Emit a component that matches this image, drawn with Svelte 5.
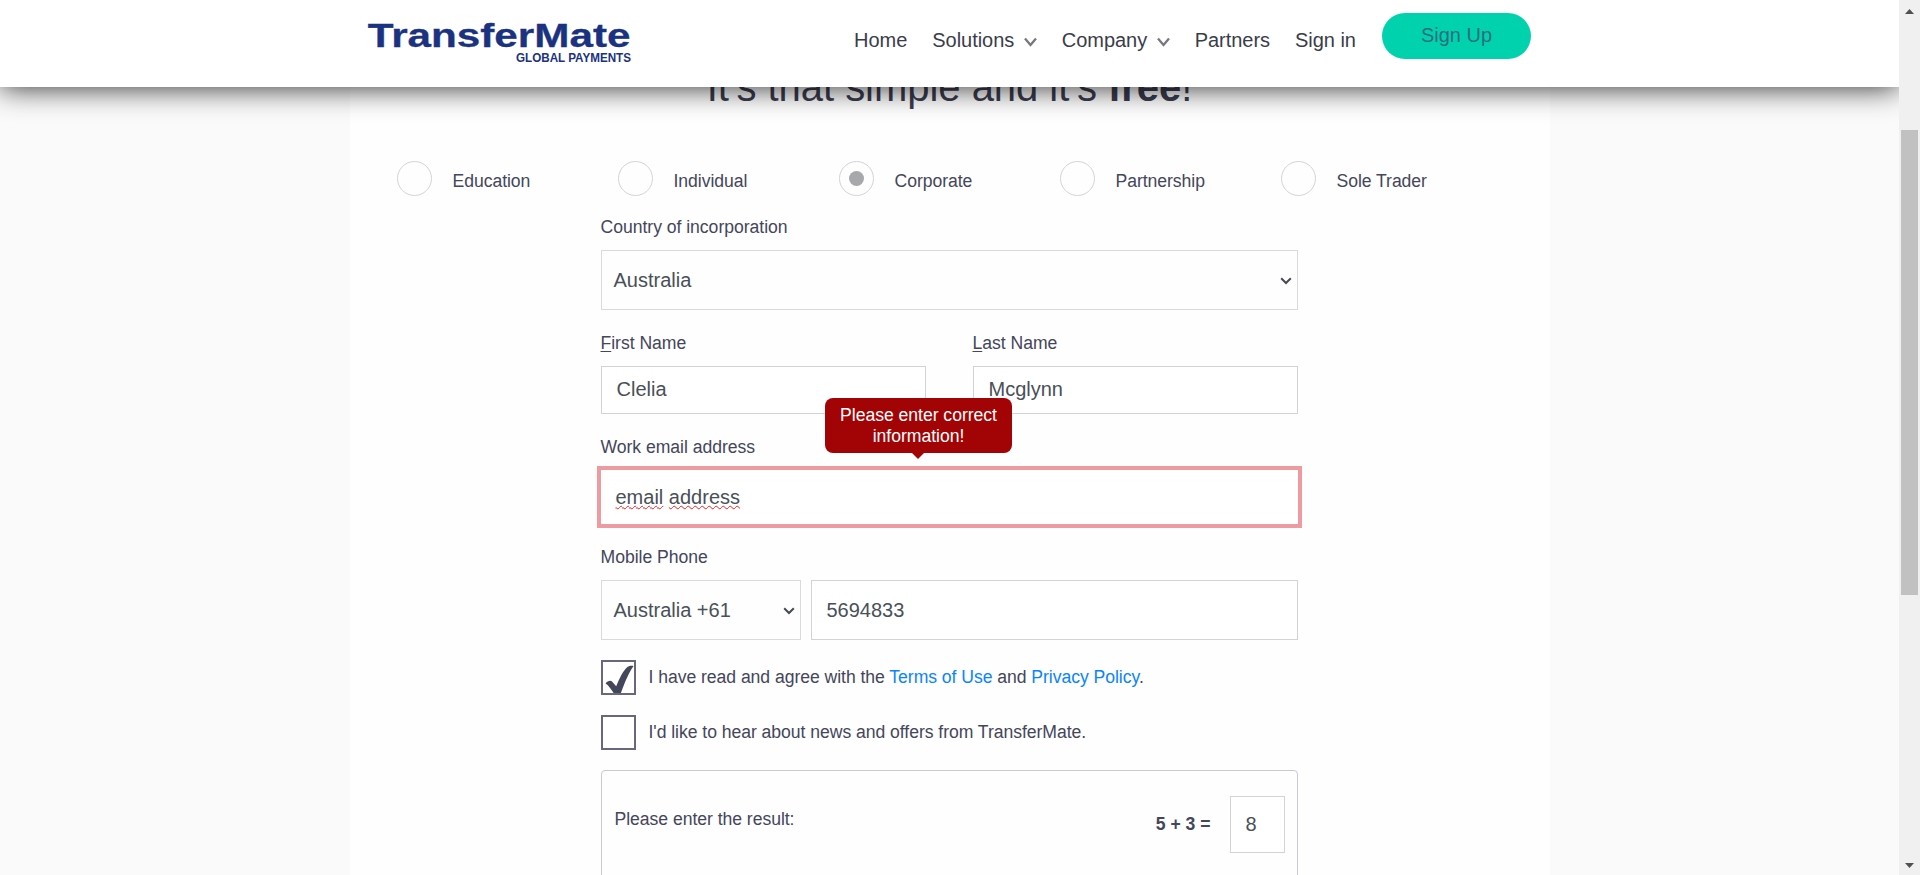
<script>
  const nav = [
    { label: 'Home' },
    { label: 'Solutions', menu: true },
    { label: 'Company', menu: true },
    { label: 'Partners' },
    { label: 'Sign in' }
  ];
  const types = ['Education', 'Individual', 'Corporate', 'Partnership', 'Sole Trader'];
  let selected = $state('Corporate');
  let first = $state('Clelia');
  let last = $state('Mcglynn');
  let phone = $state('5694833');
  let answer = $state('8');
</script>

{#snippet arrow()}
  <svg class="arrow" width="12" height="8" viewBox="0 0 12 8"><path d="M1.2 1.2 6 6 10.8 1.2" /></svg>
{/snippet}

<div class="screen">
  <header>
    <div class="bar">
      <a class="logo" href="#home" aria-label="TransferMate Global Payments">
        <svg width="266" height="44" viewBox="0 0 266 44">
          <text class="brand" transform="translate(-0.3 27) scale(1.288 1)" textLength="204" lengthAdjust="spacingAndGlyphs">TransferMate</text>
          <text class="tag" x="148" y="42" textLength="115" lengthAdjust="spacingAndGlyphs">GLOBAL PAYMENTS</text>
        </svg>
      </a>
      <nav>
        {#each nav as item}
          <a href="#nav">
            {item.label}
            {#if item.menu}
              <svg width="13" height="10" viewBox="0 0 13 10"><path d="M1 1.5 6.5 8 12 1.5" /></svg>
            {/if}
          </a>
        {/each}
      </nav>
      <a class="signup" href="#signup">Sign Up</a>
    </div>
  </header>

  <main>
    <h1>It's that simple and it's <b>free</b>!</h1>
    <div class="types">
      {#each types as t}
        <button class="type" onclick={() => (selected = t)}>
          <span class="radio" class:on={selected === t}></span>
          <span>{t}</span>
        </button>
      {/each}
    </div>

    <form>
      <div class="label">Country of incorporation</div>
      <div class="select">
        <span>Australia</span>
        {@render arrow()}
      </div>

      <div class="names">
        <div>
          <div class="label"><u>F</u>irst Name</div>
          <input bind:value={first} />
        </div>
        <div>
          <div class="label"><u>L</u>ast Name</div>
          <input bind:value={last} />
        </div>
      </div>

      <div class="label email-label">Work email address</div>
      <div class="email">
        <span class="typo">email</span>&nbsp;<span class="typo">address</span>
        <div class="tip">Please enter correct information!</div>
      </div>

      <div class="label phone-label">Mobile Phone</div>
      <div class="phone">
        <div class="select code">
          <span>Australia +61</span>
          {@render arrow()}
        </div>
        <input class="number" bind:value={phone} />
      </div>

      <div class="check">
        <span class="box">
          <svg width="31" height="31" viewBox="0 0 31 31">
            <path d="M2.6 21.4C4 19 7.4 17.9 8.8 19.2L13.2 24.2C16.4 16.4 20.2 8.4 24.4 4.9C26.2 3.6 28.8 3.5 30.6 4C26.4 9.6 21.6 20.4 17.7 31.6C15.8 33.2 12.5 33.2 11.4 32.2C8.6 27.8 6.1 23.8 2.6 21.4Z" />
          </svg>
        </span>
        <span>I have read and agree with the <a href="#terms">Terms of Use</a> and <a href="#privacy">Privacy Policy</a>.</span>
      </div>
      <div class="check">
        <span class="box"></span>
        <span>I'd like to hear about news and offers from TransferMate.</span>
      </div>

      <div class="captcha">
        <span class="ask">Please enter the result:</span>
        <b>5 + 3 =</b>
        <input class="answer" bind:value={answer} />
      </div>
    </form>
  </main>

  <aside class="scroll">
    <svg width="9" height="5" viewBox="0 0 9 5"><path d="M4.5 0 9 5H0Z" /></svg>
    <div class="track"><div class="thumb"></div></div>
    <svg width="9" height="5" viewBox="0 0 9 5"><path d="M0 0H9L4.5 5Z" /></svg>
  </aside>
</div>

<style>
  :global(body) { margin: 0; overflow: hidden; }
  .screen {
    position: relative;
    display: grid;
    grid-template-columns: 1fr 21px;
    height: 875px;
    overflow: hidden;
    background: #fafafa;
    color: #44465b;
    font: 17.6px/24px "Liberation Sans", Arial, sans-serif;
  }
  .screen * { box-sizing: border-box; }
  a { color: #0a84ff; text-decoration: none; }
  header {
    position: absolute;
    top: 0;
    left: 0;
    right: 21px;
    z-index: 3;
    height: 87px;
    background: #fff;
    box-shadow: 0 0 30px rgba(0, 0, 0, 0.86);
  }
  .bar {
    display: flex;
    width: 1163px;
    margin-left: 368px;
    align-items: flex-start;
  }
  .logo { display: block; height: 44px; margin-top: 20px; }
  .logo svg { display: block; overflow: visible; }
  .logo text { fill: #1b3281; font-family: "Liberation Sans", Arial, sans-serif; font-weight: 700; }
  .brand { font-size: 32.5px; stroke: #1b3281; stroke-width: 0.3px; }
  .tag { font-size: 12.2px; }
  nav {
    display: flex;
    gap: 25px;
    margin: 28px 0 0 220px;
    font-size: 20px;
    line-height: 24px;
    letter-spacing: -0.03px;
    white-space: nowrap;
  }
  nav a { display: flex; align-items: center; color: #3b3c4a; }
  nav svg { margin: 4px 0 0 9.5px; }
  nav path { fill: none; stroke: #77787f; stroke-width: 2.3; }
  .signup {
    width: 149px;
    height: 46px;
    margin: 13px 0 0 auto;
    border-radius: 23px;
    background: #00d2ae;
    color: #2c6e7d;
    font-size: 20px;
    line-height: 44px;
    text-align: center;
  }
  main {
    width: 1200px;
    height: 875px;
    margin: 0 auto;
    padding-top: 63px;
    background: #fefefe;
    overflow: hidden;
  }
  h1 { margin: 0; font-size: 40px; line-height: 48px; font-weight: 400; letter-spacing: -0.03px; text-align: center; color: #3b3c4f; }
  .types { display: grid; grid-template-columns: repeat(5, 221px); margin: 50px 0 0 47px; }
  .type {
    display: flex;
    align-items: center;
    gap: 21px;
    height: 35px;
    padding: 0;
    border: 0;
    background: none;
    color: inherit;
    font: inherit;
    letter-spacing: -0.05px;
  }
  .type span:last-child { padding-top: 5px; }
  .radio {
    display: grid;
    place-items: center;
    width: 35px;
    height: 35px;
    border: 1px solid #d5d4d3;
    border-radius: 50%;
  }
  .radio.on::after { content: ''; width: 15px; height: 15px; border-radius: 50%; background: #a7a8ab; }
  form { width: 697px; margin: 19px 0 0 251px; }
  .label { height: 24px; margin-bottom: 11px; letter-spacing: -0.03px; }
  .select {
    display: flex;
    align-items: center;
    justify-content: space-between;
    height: 60px;
    padding: 0 5px 0 12px;
    border: 1px solid #dadada;
    color: #495057;
    font-size: 20px;
  }
  .arrow { margin-top: 2px; }
  .arrow path { fill: none; stroke: #474c52; stroke-width: 2; }
  input {
    display: block;
    width: 100%;
    height: 48px;
    padding: 0 15px;
    border: 1px solid #ced4da;
    border-radius: 0;
    background: #fff;
    color: #495057;
    font: 20px "Liberation Sans", Arial, sans-serif;
    outline: 0;
  }
  .names { display: grid; grid-template-columns: 325px 325px; gap: 47px; margin-top: 21px; }
  .names input { padding-bottom: 2px; }
  u { text-underline-offset: 2px; text-decoration-thickness: 1px; }
  .email-label { margin: 21px 0 7px; }
  .email {
    position: relative;
    display: flex;
    align-items: center;
    height: 62px;
    margin: 0 -4px;
    padding-left: 15px;
    border: 4px solid #ee9aa1;
    background: #fff;
    color: #495057;
    font-size: 20px;
  }
  .typo { text-decoration: underline wavy #f01f1f 1.2px; text-underline-offset: 1px; text-decoration-skip-ink: none; }
  .tip {
    position: absolute;
    left: 224px;
    top: -72px;
    width: 187px;
    height: 55px;
    padding: 7px 11px 7px 12px;
    border-radius: 8px;
    background: #a20406;
    color: #fff;
    font-size: 17.6px;
    line-height: 21px;
    letter-spacing: -0.03px;
    text-align: center;
  }
  .tip::after {
    content: '';
    position: absolute;
    left: 87px;
    top: 55px;
    border: 6px solid transparent;
    border-width: 6px 6.5px 0;
    border-top-color: #a20406;
  }
  .phone-label { margin-top: 17px; }
  .phone { display: grid; grid-template-columns: 200px 1fr; gap: 10px; }
  .number { height: 60px; }
  .check { display: flex; gap: 13px; height: 35px; margin-top: 20px; letter-spacing: -0.045px; }
  .check > span:last-child { padding-top: 5px; }
  .box { width: 35px; height: 35px; border: 2px solid #67687c; background: #fff; }
  .box svg { display: block; }
  .box path { fill: #44465b; }
  .captcha {
    display: flex;
    height: 140px;
    margin-top: 20px;
    padding: 25px 12px 0 13px;
    border: 1px solid #c5cad8;
    border-radius: 4px;
  }
  .ask { margin-top: 11px; flex: 1; letter-spacing: -0.04px; }
  .captcha b { margin: 16px 19px 0 0; }
  .answer { width: 55px; height: 57px; }
  .scroll {
    display: flex;
    flex-direction: column;
    align-items: center;
    position: relative;
    z-index: 4;
    padding: 9px 0 7px;
    background: #f0f0f0;
  }
  .scroll path { fill: #505050; }
  .track { flex: 1; padding-top: 116px; }
  .thumb { width: 17px; height: 465px; background: #c1c1c1; }
</style>
